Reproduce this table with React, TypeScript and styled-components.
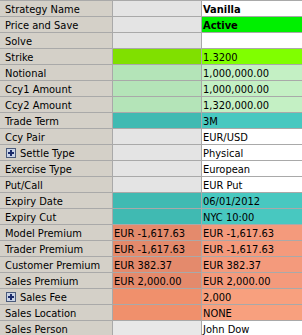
import styled, { createGlobalStyle } from "styled-components";

const GlobalStyle = createGlobalStyle`
  html, body {
    margin: 0;
    padding: 0;
    background: #ffffff;
  }
`;

const Grid = styled.div`
  width: 302px;
  padding-top: 1px;
  background: #a9a9a9;
  font-family: "DejaVu Sans", Tahoma, sans-serif;
  font-stretch: condensed;
  font-size: 11px;
  color: #000;
`;

const Row = styled.div`
  display: grid;
  grid-template-columns: 112px 88px 100px;
  column-gap: 1px;
  margin-bottom: 1px;
  height: 15px;
`;

const Label = styled.div`
  display: flex;
  align-items: center;
  gap: 4px;
  padding: 1px 0 0 5px;
  background: #d4d0c8;
  white-space: nowrap;
  overflow: hidden;
`;

const Cell = styled.div<{ $bg: string; $bold?: boolean }>`
  display: flex;
  align-items: center;
  padding: 1px 0 0 1px;
  background: ${({ $bg }) => $bg};
  font-weight: ${({ $bold }) => ($bold ? "bold" : "normal")};
  white-space: nowrap;
  overflow: hidden;
`;

const Expander = styled.svg`
  flex: none;
  margin-left: 1px;
`;

const PlusBox = () => (
  <Expander width="10" height="10" viewBox="0 0 10 10">
    <rect x="0.5" y="0.5" width="9" height="9" fill="#c9d3e6" stroke="#4a5a7a" />
    <rect x="2" y="4" width="6" height="2" fill="#1c2c6c" />
    <rect x="4" y="2" width="2" height="6" fill="#1c2c6c" />
  </Expander>
);

type Line = {
  label: string;
  mid: string;
  right: string;
  value?: string;
  model?: string;
  bold?: boolean;
  expand?: boolean;
};

const GREY = "#e4e4e4";
const WHITE = "#ffffff";
const LIME = "#80e000";
const LIME_R = "#80ff00";
const MINT = "#b4e4b8";
const MINT_R = "#c4f0c4";
const TEAL = "#40bab2";
const TEAL_R = "#48c8c0";
const SALMON = "#e48a6c";
const SALMON_R = "#f49a7c";
const PEACH = "#f0906c";
const PEACH_R = "#f8a07e";

const lines: Line[] = [
  { label: "Strategy Name", mid: GREY, right: WHITE, value: "Vanilla", bold: true },
  { label: "Price and Save", mid: GREY, right: "#00f000", value: "Active", bold: true },
  { label: "Solve", mid: GREY, right: WHITE },
  { label: "Strike", mid: LIME, right: LIME_R, value: "1.3200" },
  { label: "Notional", mid: MINT, right: MINT_R, value: "1,000,000.00" },
  { label: "Ccy1 Amount", mid: MINT, right: MINT_R, value: "1,000,000.00" },
  { label: "Ccy2 Amount", mid: MINT, right: MINT_R, value: "1,320,000.00" },
  { label: "Trade Term", mid: TEAL, right: TEAL_R, value: "3M" },
  { label: "Ccy Pair", mid: GREY, right: WHITE, value: "EUR/USD" },
  { label: "Settle Type", mid: GREY, right: WHITE, value: "Physical", expand: true },
  { label: "Exercise Type", mid: GREY, right: WHITE, value: "European" },
  { label: "Put/Call", mid: GREY, right: WHITE, value: "EUR Put" },
  { label: "Expiry Date", mid: TEAL, right: TEAL_R, value: "06/01/2012" },
  { label: "Expiry Cut", mid: TEAL, right: TEAL_R, value: "NYC 10:00" },
  { label: "Model Premium", mid: SALMON, right: SALMON_R, model: "EUR -1,617.63", value: "EUR -1,617.63" },
  { label: "Trader Premium", mid: SALMON, right: SALMON_R, model: "EUR -1,617.63", value: "EUR -1,617.63" },
  { label: "Customer Premium", mid: SALMON, right: SALMON_R, model: "EUR 382.37", value: "EUR 382.37" },
  { label: "Sales Premium", mid: SALMON, right: SALMON_R, model: "EUR 2,000.00", value: "EUR 2,000.00" },
  { label: "Sales Fee", mid: PEACH, right: PEACH_R, value: "2,000", expand: true },
  { label: "Sales Location", mid: PEACH, right: PEACH_R, value: "NONE" },
  { label: "Sales Person", mid: "#e8e8e8", right: WHITE, value: "John Dow" },
];

export default function App() {
  return (
    <>
      <GlobalStyle />
      <Grid>
        {lines.map((l) => (
          <Row key={l.label}>
            <Label>
              {l.expand && <PlusBox />}
              {l.label}
            </Label>
            <Cell $bg={l.mid}>{l.model}</Cell>
            <Cell $bg={l.right} $bold={l.bold}>
              {l.value}
            </Cell>
          </Row>
        ))}
      </Grid>
    </>
  );
}
